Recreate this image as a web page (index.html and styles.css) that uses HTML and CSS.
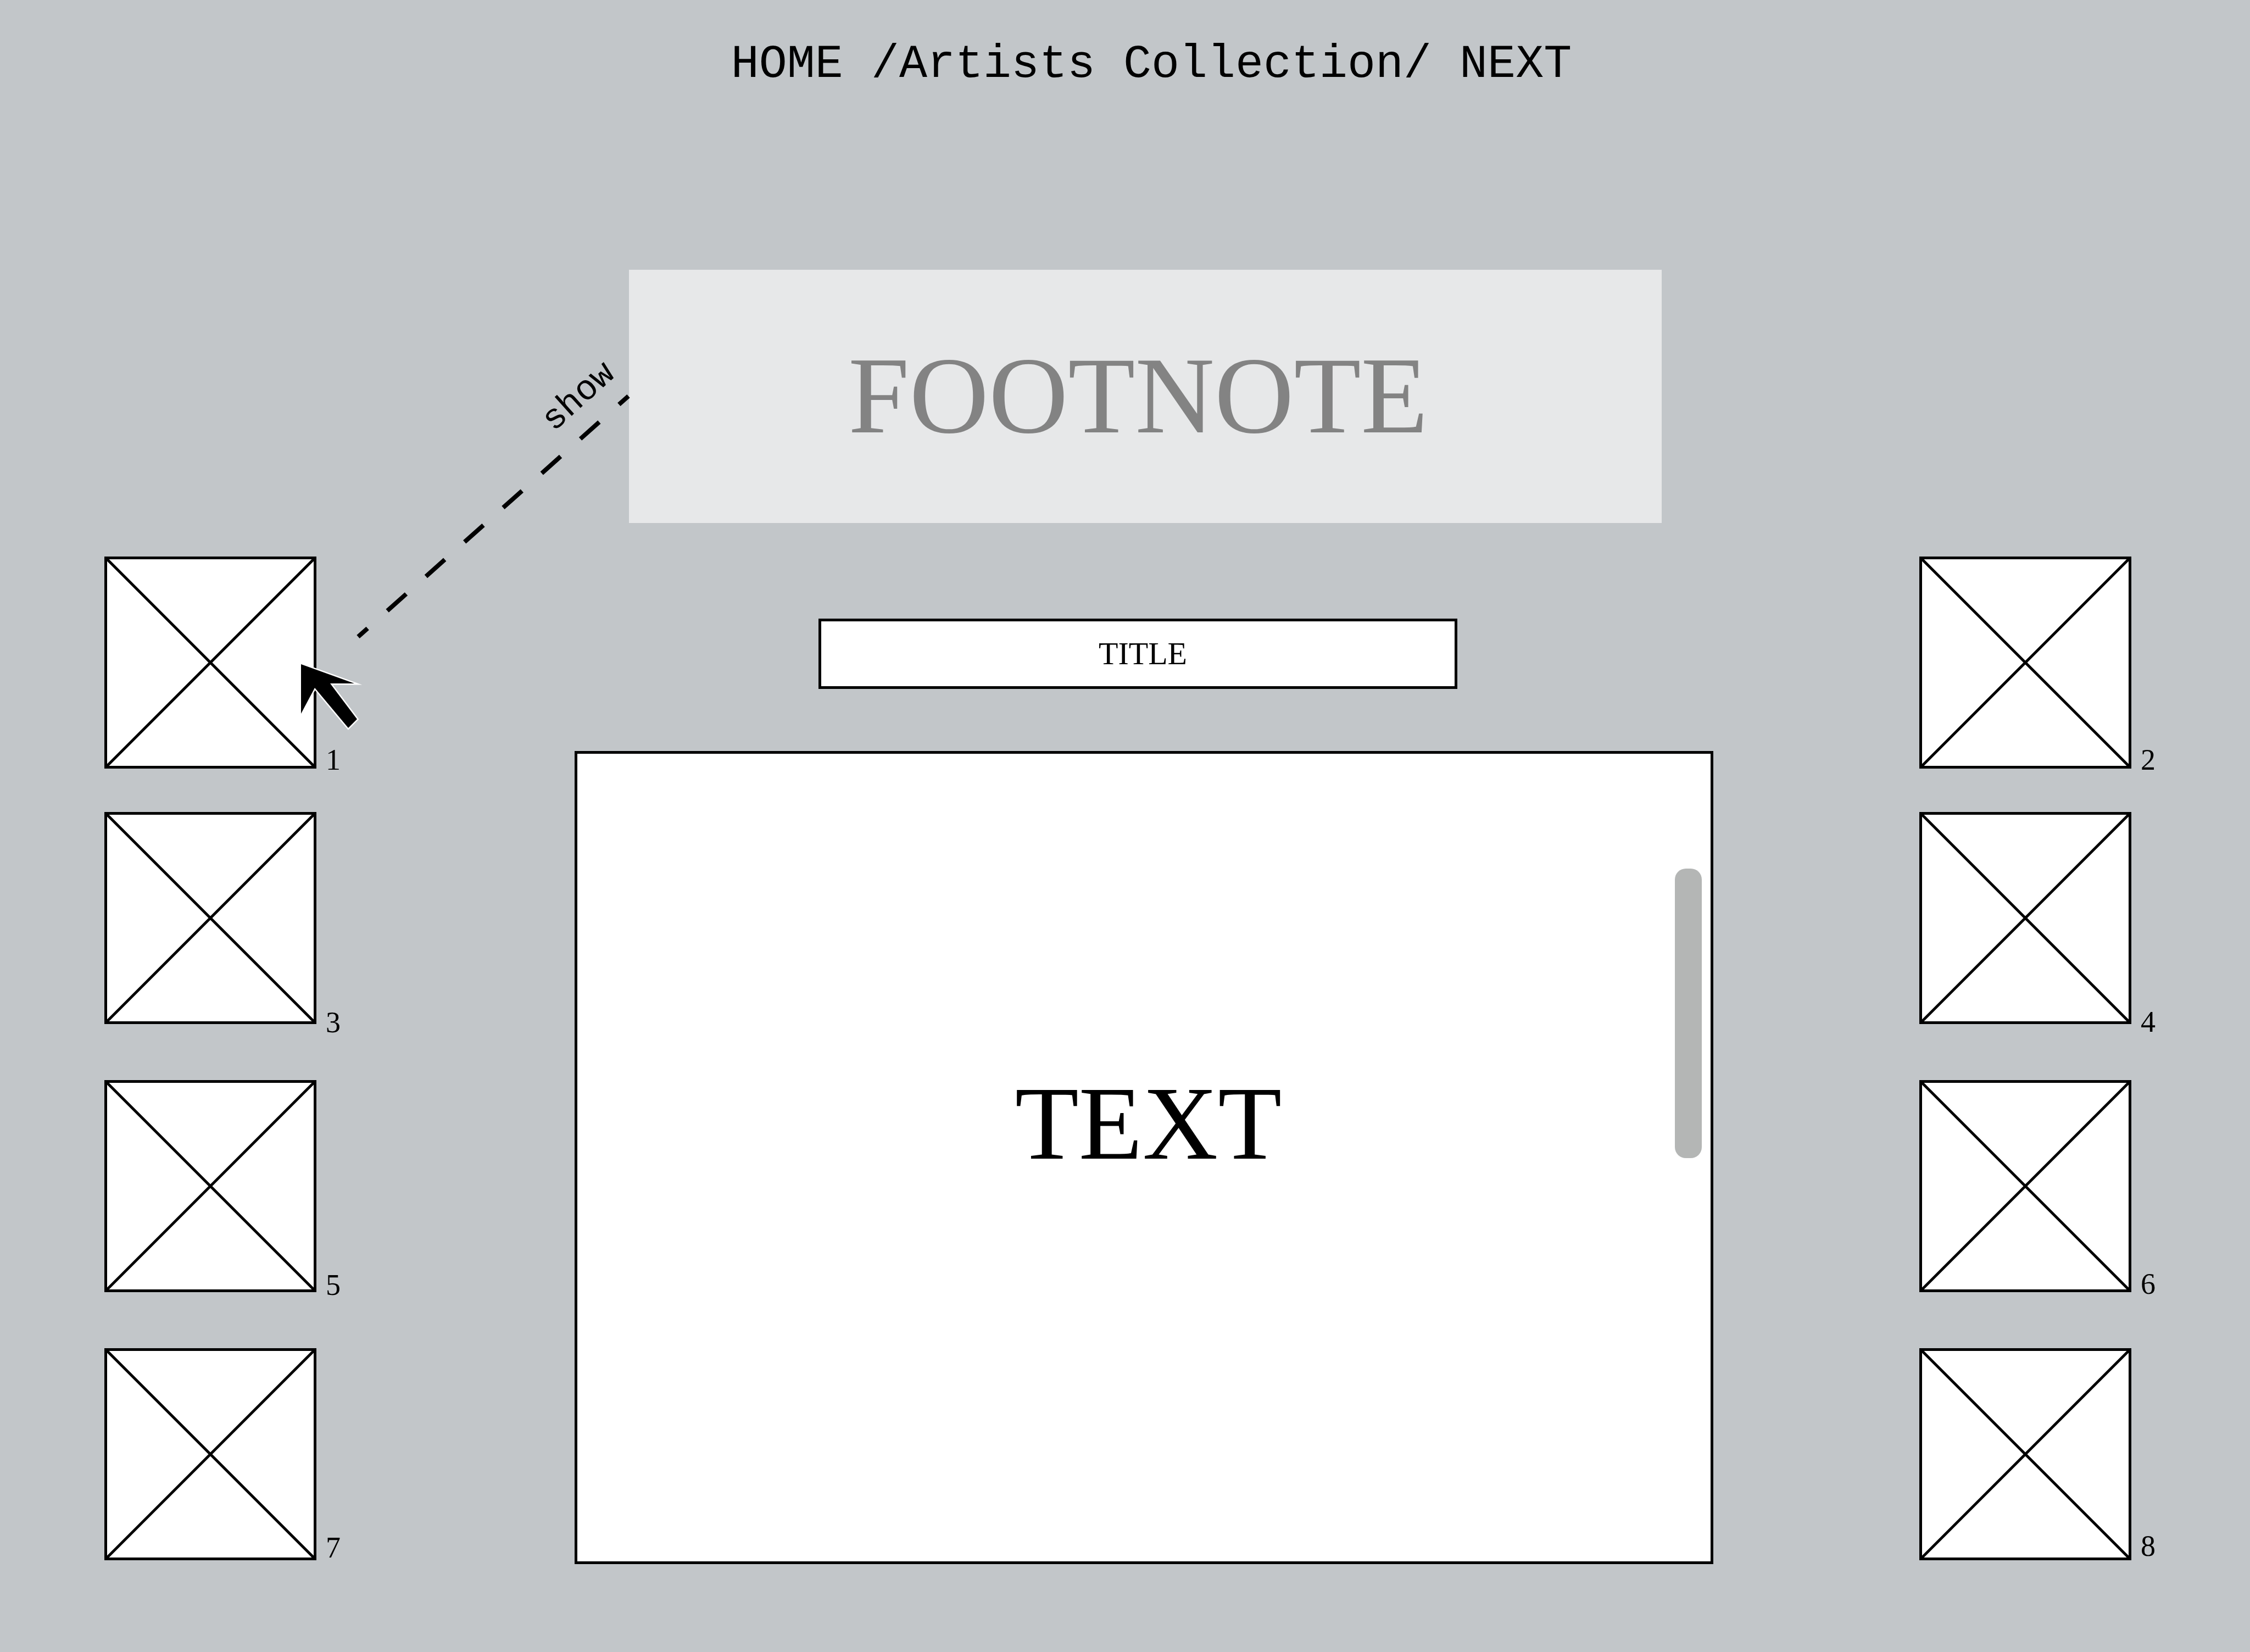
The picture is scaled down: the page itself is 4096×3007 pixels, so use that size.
FILE: index.html
```html
<!DOCTYPE html>
<html lang="en">
<head>
<meta charset="utf-8">
<title>Artists Collection</title>
<link rel="stylesheet" href="styles.css">
</head>
<body>
<svg class="symbols" aria-hidden="true">
  <symbol id="frame" viewBox="0 0 386 386">
    <rect x="2.5" y="2.5" width="381" height="381" fill="#fff" stroke="#000" stroke-width="5"/>
    <path d="M3 3 383 383M383 3 3 383" stroke="#000" stroke-width="5"/>
  </symbol>
</svg>
<header class="site-header">
  <nav class="site-nav"><a href="#home">HOME</a> /<a href="#collection">Artists Collection</a>/ <a href="#next">NEXT</a></nav>
</header>
<main class="layout">
  <section class="gallery" aria-label="Odd works">
    <div class="frames">
      <svg class="frame"><use href="#frame"/></svg>
      <svg class="frame"><use href="#frame"/></svg>
      <svg class="frame"><use href="#frame"/></svg>
      <svg class="frame"><use href="#frame"/></svg>
    </div>
    <div class="numbers"><span>1</span><span>3</span><span>5</span><span>7</span></div>
  </section>
  <article class="story">
    <aside class="footnote">FOOTNOTE</aside>
    <h1 class="title">TITLE</h1>
    <div class="text-panel">
      <p class="text">TEXT</p>
      <div class="scroll-thumb"></div>
    </div>
  </article>
  <section class="gallery gallery-right" aria-label="Even works">
    <div class="frames">
      <svg class="frame"><use href="#frame"/></svg>
      <svg class="frame"><use href="#frame"/></svg>
      <svg class="frame"><use href="#frame"/></svg>
      <svg class="frame"><use href="#frame"/></svg>
    </div>
    <div class="numbers"><span>2</span><span>4</span><span>6</span><span>8</span></div>
  </section>
  <svg class="pointer" viewBox="540 620 640 740">
    <path d="M652 1159 1144 721" stroke="#000" stroke-width="8" stroke-dasharray="46 48.1" stroke-dashoffset="23"/>
    <text class="pointer-label" text-anchor="middle" transform="translate(1065 735) rotate(-42)">show</text>
    <path d="M548 1209 645 1244H601L650 1309 634 1325 573 1252 548 1299Z" fill="#000" stroke="#fff" stroke-width="5" stroke-miterlimit="10" paint-order="stroke"/>
  </svg>
</main>
</body>
</html>
```
FILE: styles.css
```css
* { box-sizing: border-box; }

body {
  margin: 0;
  background: #c2c6c9;
  color: #000;
  font-family: "Liberation Serif", serif;
}

.symbols { position: absolute; width: 0; height: 0; }

.site-header {
  padding: 68px 0 0 96px;
  text-align: center;
}

.site-nav {
  font: 85px/100px "Liberation Mono", monospace;
}

.site-nav a { color: inherit; text-decoration: none; }

.layout {
  position: relative;
  display: flex;
  align-items: flex-start;
  padding: 323px 170px 160px 190px;
}

.gallery {
  display: flex;
  gap: 17px;
  padding-top: 522px;
}

.frames {
  display: flex;
  flex-direction: column;
  gap: 102px;
}

.frame { display: block; width: 386px; height: 386px; }
.frame:first-child { margin-bottom: -23px; }

.numbers {
  display: flex;
  flex-direction: column;
  gap: 418px;
  width: 29px;
  padding-top: 340px;
  font-size: 54px;
  line-height: 60px;
}

.gallery-right .numbers { gap: 417px; }

.story {
  flex: 1;
  margin: 0 375px 0 424px;
}

.footnote {
  display: flex;
  align-items: center;
  justify-content: center;
  height: 461px;
  margin: 0 94px 0 99px;
  padding: 0 26px 4px 0;
  background: #e7e8e9;
  color: #838383;
  font-size: 200px;
}

.title {
  margin: 174px 466px 113px 444px;
  padding-left: 18px;
  border: 5px solid #000;
  background: #fff;
  font-size: 58px;
  font-weight: 400;
  line-height: 118px;
  text-align: center;
}

.text-panel {
  position: relative;
  display: flex;
  align-items: center;
  justify-content: center;
  height: 1480px;
  border: 5px solid #000;
  background: #fff;
}

.text {
  margin: 0;
  padding: 0 0 124px 16px;
  font-size: 190px;
}

.scroll-thumb {
  position: absolute;
  top: 209px;
  right: 16px;
  width: 49px;
  height: 527px;
  border-radius: 20px;
  background: #b4b6b5;
}

.pointer {
  position: absolute;
  top: 452px;
  left: 540px;
  width: 640px;
  height: 740px;
}

.pointer-label { font: 64px "Liberation Mono", monospace; }
```
